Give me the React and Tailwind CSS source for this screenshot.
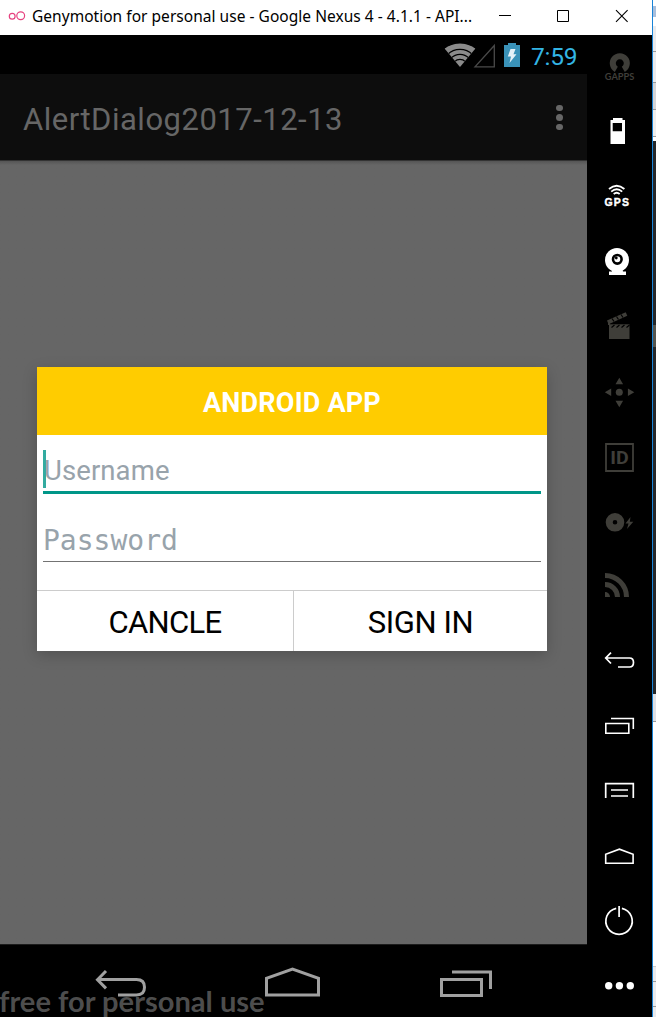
import React from "react";

function Glyph({ children, className = "" }) {
  return (
    <svg width="65" height="65" viewBox="0 0 65 65" fill="none" className={"block shrink-0 " + className}>
      {children}
    </svg>
  );
}

function TitleBar() {
  return (
    <header className="flex h-[35px] shrink-0 items-center bg-white text-black">
      <svg width="32" height="35" viewBox="0 0 32 35" fill="none" stroke="#e6417f" strokeWidth="1.2" className="block shrink-0">
        <circle cx="12.2" cy="16.3" r="2.9" />
        <circle cx="20.7" cy="15.7" r="3.9" />
      </svg>
      <div className="w-[454px] whitespace-nowrap pb-[1px] font-['Noto_Sans',sans-serif] text-[15.5px] tracking-[0.03px]">
        Genymotion for personal use - Google Nexus 4 - 4.1.1 - API...
      </div>
      <svg width="166" height="35" viewBox="486 0 166 35" fill="none" stroke="#000" className="block shrink-0">
        <path d="M499 15.5h12" />
        <path d="M557.5 10.5h11v11h-11z" />
        <path d="M616 10.2l11.6 11.6M627.6 10.2L616 21.8" strokeWidth="1.1" />
      </svg>
    </header>
  );
}

function StatusBar() {
  return (
    <div className="flex h-[39px] shrink-0 items-center justify-end bg-black pr-[9px]">
      <svg width="84" height="39" viewBox="440 35 84 39" className="block">
        <clipPath id="fan">
          <path d="M460 67L444.5 48.5Q460 38.500 475.500 48.500z" />
        </clipPath>
        <g clipPath="url(#fan)">
          <circle cx="460" cy="67" r="24" fill="#8b8b8b" />
          <g fill="none" stroke="#000" strokeWidth="1.3">
            <circle cx="460" cy="67" r="17.6" />
            <circle cx="460" cy="67" r="12.6" />
            <circle cx="460" cy="67" r="7.6" />
          </g>
        </g>
        <path d="M494.300 45.500V66.800H475z" fill="none" stroke="#4a4a4a" strokeWidth="1.3" />
        <path d="M504 45h4v-2h8v2h4v22h-16z" fill="#3a92b8" />
        <path d="M510.500 49h5l-2 5.200h3L509.500 63l1.500-6.500h-3.200z" fill="#e4f1f7" />
      </svg>
      <span className="ml-[7px] mt-[3px] w-[47px] whitespace-nowrap font-[Roboto,sans-serif] text-[24.5px] tracking-[-0.2px] leading-[39px] text-[#33b5e5]">
        7:59
      </span>
    </div>
  );
}

function ActionBar() {
  return (
    <div className="flex h-[87px] shrink-0 items-center justify-between border-b border-[#333] bg-[#0d0d0d] pl-[23px] pr-[24.500px] text-[#666]">
      <h1 className="pt-[6px] font-[Roboto,sans-serif] text-[31px] tracking-[0.5px]">AlertDialog2017-12-13</h1>
      <div className="mt-[1px] flex flex-col gap-[3px]">
        <i className="size-[6.300px] rounded-full bg-[#666]" />
        <i className="size-[6.300px] rounded-full bg-[#666]" />
        <i className="size-[6.300px] rounded-full bg-[#666]" />
      </div>
    </div>
  );
}

function LoginDialog() {
  return (
    <section className="flex h-[284px] w-[510px] flex-col bg-white font-[Roboto,sans-serif] shadow-[0_4px_14px_rgba(0,0,0,0.2)]">
      <h2 className="flex h-[68px] shrink-0 items-center justify-center bg-[#ffcc00] pt-[4px] text-[27px] font-bold tracking-[0.2px] text-white">
        ANDROID APP
      </h2>
      <div className="mx-[6px] flex h-[59px] shrink-0 items-center border-b-3 border-[#009688] pt-[12px] text-[#98a3ab]">
        <i className="h-[38px] w-[3px] shrink-0 bg-[#33aba0]" />
        <span className="-ml-[2px] mt-[4px] text-[27.5px] tracking-[0.1px]">Username</span>
      </div>
      <div className="mx-[6px] flex h-[68px] shrink-0 items-center border-b border-[#737373] pt-[27px] font-['DejaVu_Sans_Mono',monospace] text-[#98a3ab]">
        <span className="text-[28px]">Password</span>
      </div>
      <div className="mt-[28px] flex flex-1 border-t border-[#ccc] text-[31px] text-black">
        <button className="flex w-[257px] items-center justify-center border-r border-[#ccc] pt-[5px] tracking-[-0.7px]">CANCLE</button>
        <button className="flex flex-1 items-center justify-center pt-[5px] tracking-[-0.4px]">SIGN IN</button>
      </div>
    </section>
  );
}

function NavBar() {
  return (
    <div className="relative h-[73px] shrink-0 overflow-hidden border-t border-[#1c1c1c] bg-black">
      <svg width="587" height="72" viewBox="0 945 587 72" fill="none" stroke="#a0a0a0" strokeWidth="3" className="block">
        <path d="M106 971l-8.500 8.700 8.500 8.700M98 979.500h38.500q8 0 8 7.700t-8 7.700H118" />
        <path d="M266.500 995v-16.700l26-9.300 26 9.300V995z" />
        <path d="M441.500 979.500h40v16h-40zM452 972h38.500v17" />
      </svg>
      <div className="absolute -left-px top-[39px] whitespace-nowrap font-[Lato,sans-serif] text-[29.1px] font-bold leading-[34px] text-[#707070]/70">
        free for personal use
      </div>
    </div>
  );
}

function Sidebar() {
  return (
    <aside className="flex w-[65px] shrink-0 flex-col overflow-hidden bg-black">
      <Glyph>
        <path d="M29.300 34.300A7 7 0 1 1 36.300 34.300" stroke="#3f3e39" strokeWidth="6" />
        <text x="17.800" y="45.200" textLength="29.500" lengthAdjust="spacingAndGlyphs" fontFamily="Lato, sans-serif" fontSize="9.500" fontWeight="700" fill="#3f3e39">GAPPS</text>
      </Glyph>
      <Glyph>
        <path d="M23.500 20H26v-2h9.500v2H38v24H23.500zM25.700 23v8.300H35V23z" fill="#fff" fillRule="evenodd" />
      </Glyph>
      <Glyph>
        <path d="M22 24q7.700-6.600 15.400 0M24.200 26.600q5.500-4.600 11 0M26.700 29q3-2.600 6 0" stroke="#fff" strokeWidth="1.800" />
        <text x="17.500" y="41.200" textLength="24.500" fontFamily="Liberation Sans, sans-serif" fontSize="10.500" fontWeight="700" fill="#fff" stroke="#fff" strokeWidth="0.400">GPS</text>
      </Glyph>
      <Glyph>
        <circle cx="30" cy="30" r="12" fill="#fff" />
        <path d="M25 39h10l1 2.500h3V45H22v-3.500h3z" fill="#fff" />
        <circle cx="30.300" cy="29.300" r="4.300" stroke="#000" strokeWidth="2.600" />
        <circle cx="29.300" cy="28" r="1.400" fill="#000" />
      </Glyph>
      <Glyph>
        <path d="M22 29.300h20.500V44H22z" fill="#3f3e39" />
        <path d="M20.800 27.300L39.500 19" stroke="#3f3e39" strokeWidth="4" />
        <path d="M22 26v4" stroke="#3f3e39" strokeWidth="2" />
        <path d="M25 23.500l2 3M29.500 21.500l2 3M34 19.500l2 3M24.500 32.500l3-2.500M29.500 32.500l3-2.500M34.500 32.500l3-2.500M39.500 32.500l3-2.500" stroke="#000" strokeWidth="1.200" />
      </Glyph>
      <Glyph>
        <g fill="#3f3e39">
          <circle cx="32.300" cy="32.300" r="3.500" />
          <path d="M32.300 17.800l3.800 6.400h-7.600zM32.300 47.200l3.800-6.400h-7.600zM17.800 32.300l6.400-3.800v7.600zM47.300 32.300l-6.400-3.800v7.600z" />
        </g>
      </Glyph>
      <Glyph>
        <path d="M19 19h27v27H19z" stroke="#3f3e39" strokeWidth="1.800" />
        <text x="23.300" y="39" textLength="18.500" lengthAdjust="spacingAndGlyphs" fontFamily="Roboto, sans-serif" fontSize="18" fontWeight="700" fill="#3f3e39">ID</text>
      </Glyph>
      <Glyph>
        <circle cx="28" cy="32.300" r="5.800" stroke="#3f3e39" strokeWidth="7" />
        <path d="M43.500 27l-5 6.500h3L40 39l6.300-7.300h-3.500z" fill="#3f3e39" />
      </Glyph>
      <Glyph className="mb-[8px]">
        <path d="M18 20.500A21.500 21.500 0 0 1 39.500 42M18 29.500A12.500 12.500 0 0 1 30.500 42" stroke="#3f3e39" strokeWidth="5" />
        <path d="M18 37a5 5 0 0 1 5 5h-5z" fill="#3f3e39" />
      </Glyph>
      <Glyph>
        <path d="M24 24.700L18.700 30l5.300 5.500M19 30h23.500q4 0 4 4.500t-4 4.500H31" stroke="#fff" strokeWidth="1.700" />
      </Glyph>
      <Glyph>
        <path d="M18.800 30.500h23v9.700h-23zM24 25.500h22.300V36" stroke="#fff" strokeWidth="1.600" />
      </Glyph>
      <Glyph>
        <path d="M18.700 40V25.700h27.600V40M24 32h17M24 38h17" stroke="#fff" strokeWidth="1.700" />
      </Glyph>
      <Glyph>
        <path d="M18.700 40.200v-9l13.700-5 13.700 5v9z" stroke="#fff" strokeWidth="1.600" />
      </Glyph>
      <Glyph>
        <path d="M29.200 20.300A13.200 13.200 0 1 0 34.900 20.300M32.100 18v11" stroke="#fff" strokeWidth="1.700" />
      </Glyph>
      <Glyph>
        <circle cx="21.700" cy="32.700" r="3.700" fill="#fff" />
        <circle cx="32.400" cy="32.700" r="3.700" fill="#fff" />
        <circle cx="43.300" cy="32.700" r="3.700" fill="#fff" />
      </Glyph>
    </aside>
  );
}

function BackgroundEdge() {
  return (
    <div className="flex w-[3px] shrink-0 flex-col bg-[#e9ebee]">
      <i className="h-[6px] bg-white" />
      <i className="h-[11px] bg-[#a9bfdc]" />
      <i className="h-[9px] bg-white" />
      <i className="h-[26px] border-b border-[#999]" />
      <i className="h-[31px] border-b border-[#999]" />
      <i className="h-[27px] border-b border-[#999] bg-[#d4d5d8]" />
      <i className="h-[27px] border-b border-[#999] bg-[#eee]" />
      <i className="h-[4px] bg-white" />
      <i className="h-[184px] bg-[#25272a]" />
      <i className="h-[22px] bg-[#55554f]" />
      <i className="h-[347px] bg-[#25272a]" />
      <i className="h-[28px] border-b border-[#999] bg-[#dde0e6]" />
      <i className="h-[245px] border-b border-[#ccc] bg-white" />
      <i className="h-[15px] border-b border-[#999]" />
      <i className="h-[25px] border-b border-[#999]" />
    </div>
  );
}

export default function App() {
  return (
    <main className="flex h-[1017px] w-[656px] overflow-hidden bg-black">
      <div className="flex w-[652px] shrink-0 flex-col">
        <TitleBar />
        <div className="flex min-h-0 flex-1">
          <div className="flex w-[587px] shrink-0 flex-col">
            <StatusBar />
            <ActionBar />
            <div className="flex min-h-0 flex-1 justify-center bg-[#666] bg-linear-to-b from-[#555] to-[#666] to-[4px] pr-[3px] pt-[206px]">
              <LoginDialog />
            </div>
            <NavBar />
          </div>
          <Sidebar />
        </div>
      </div>
      <div className="w-px shrink-0 bg-[#1883d7]" />
      <BackgroundEdge />
    </main>
  );
}
